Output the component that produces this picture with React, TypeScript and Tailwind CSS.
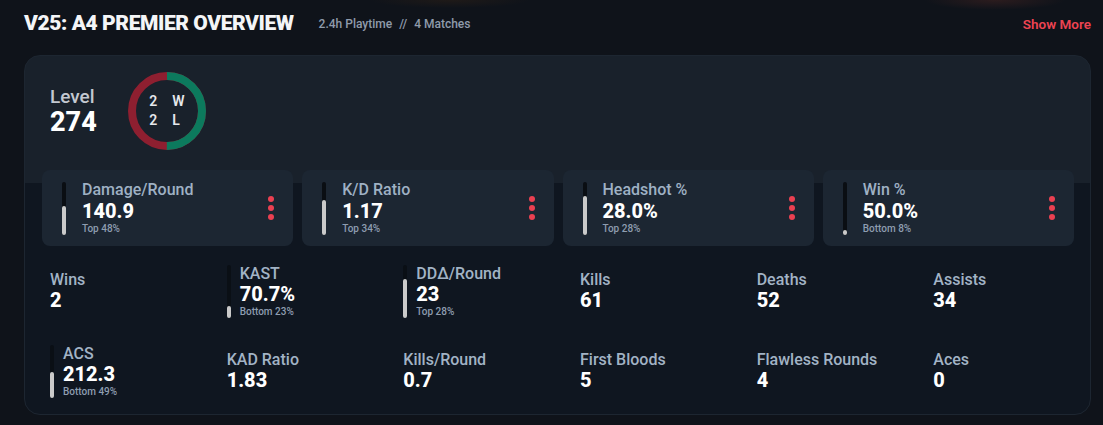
import React from 'react';

type Stat = {
  label: string;
  value: string;
  sub?: string;
  fill?: number;
};

const cardStats: Stat[] = [
  { label: 'Damage/Round', value: '140.9', sub: 'Top 48%', fill: 53 },
  { label: 'K/D Ratio', value: '1.17', sub: 'Top 34%', fill: 65 },
  { label: 'Headshot %', value: '28.0%', sub: 'Top 28%', fill: 73 },
  { label: 'Win %', value: '50.0%', sub: 'Bottom 8%', fill: 8 },
];

const gridStats: Stat[] = [
  { label: 'Wins', value: '2' },
  { label: 'KAST', value: '70.7%', sub: 'Bottom 23%', fill: 22 },
  { label: 'DDΔ/Round', value: '23', sub: 'Top 28%', fill: 73 },
  { label: 'Kills', value: '61' },
  { label: 'Deaths', value: '52' },
  { label: 'Assists', value: '34' },
  { label: 'ACS', value: '212.3', sub: 'Bottom 49%', fill: 49 },
  { label: 'KAD Ratio', value: '1.83' },
  { label: 'Kills/Round', value: '0.7' },
  { label: 'First Bloods', value: '5' },
  { label: 'Flawless Rounds', value: '4' },
  { label: 'Aces', value: '0' },
];

// vertical percentile bar, fills from the bottom
function Bar({ fill, track }: { fill: number; track: string }) {
  return (
    <div className={`flex h-[53px] w-[4px] shrink-0 flex-col justify-end rounded-full ${track}`}>
      <div className="w-full rounded-full bg-[#cacaca]" style={{ height: `${fill}%` }} />
    </div>
  );
}

function WinLossRing({ wins, losses }: { wins: number; losses: number }) {
  const r = 35;
  const c = 2 * Math.PI * r;
  const winPart = (wins / (wins + losses)) * c;
  return (
    <div className="relative h-[78px] w-[78px] shrink-0">
      <svg viewBox="0 0 78 78" className="h-full w-full -rotate-90">
        <circle cx="39" cy="39" r={r} fill="none" stroke="#8e1f30" strokeWidth="8" />
        <circle
          cx="39"
          cy="39"
          r={r}
          fill="none"
          stroke="#0c7a5d"
          strokeWidth="8"
          strokeDasharray={`${winPart} ${c}`}
        />
      </svg>
      <div className="absolute inset-0 flex items-center justify-center">
        <div className="grid grid-cols-[auto_auto] gap-x-[15px] text-[14px] font-semibold leading-[19px] text-[#e6e8ec]">
          <span>{wins}</span>
          <span>W</span>
          <span>{losses}</span>
          <span>L</span>
        </div>
      </div>
    </div>
  );
}

function StatCard({ stat }: { stat: Stat }) {
  return (
    <div className="flex h-[76px] items-center rounded-lg bg-[#1c2632] pl-[20px] pr-[19px]">
      <Bar fill={stat.fill ?? 0} track="bg-[#0a0e13]" />
      <div className="ml-[16px] flex min-w-0 flex-1 flex-col">
        <div className="text-[16px] font-medium leading-[18px] text-[#9fb1c4]">{stat.label}</div>
        <div className="text-[20px] font-extrabold leading-[24px] text-white">{stat.value}</div>
        <div className="text-[10px] font-medium leading-[12px] text-[#8e9db0]">{stat.sub}</div>
      </div>
      <div className="flex flex-col gap-[3px]">
        <span className="h-[6px] w-[6px] rounded-full bg-[#ea4051]" />
        <span className="h-[6px] w-[6px] rounded-full bg-[#ea4051]" />
        <span className="h-[6px] w-[6px] rounded-full bg-[#ea4051]" />
      </div>
    </div>
  );
}

function GridStat({ stat }: { stat: Stat }) {
  return (
    <div className="flex h-[53px] items-center gap-[9px]">
      {stat.fill !== undefined && <Bar fill={stat.fill} track="bg-[#0a0f15]" />}
      <div className="flex flex-col">
        <div className="whitespace-nowrap text-[16px] font-medium leading-[18px] text-[#a2b3c5]">
          {stat.label}
        </div>
        <div className="text-[20px] font-extrabold leading-[23px] text-white">{stat.value}</div>
        {stat.sub && (
          <div className="text-[10px] font-medium leading-[12px] text-[#8e9db0]">{stat.sub}</div>
        )}
      </div>
    </div>
  );
}

export default function App() {
  return (
    <div className="min-h-[425px] w-full bg-[#0f131a] bg-[radial-gradient(ellipse_70px_10px_at_995px_0px,#2c1c1e,transparent),radial-gradient(ellipse_80px_8px_at_450px_0px,#1f1a18,transparent)] pl-6 pr-3 pt-[11px] font-['Roboto',sans-serif]">
      <div className="mb-[20px] flex h-[24px] items-center">
        <h1 className="text-[21px] font-black uppercase leading-[24px] tracking-[-0.02em] text-[#f4f5f7]">
          V25: A4 Premier Overview
        </h1>
        <div className="ml-[25px] mt-[2px] flex items-center gap-[7px] text-[12px] font-medium text-[#8f9bab]">
          <span>2.4h Playtime</span>
          <span>//</span>
          <span>4 Matches</span>
        </div>
        <button className="ml-auto mt-[2px] text-[13.5px] font-semibold text-[#ec4352]">Show More</button>
      </div>

      <div className="rounded-[16px] border border-[#1d2631] bg-[linear-gradient(to_bottom,#19212b_127px,#0f1620_127px)] pb-[16px] pl-[17px] pr-[16px] pt-[16px]">
        <div className="flex items-center pl-[8px]">
          <div className="flex w-[78px] flex-col">
            <span className="text-[19px] font-medium leading-[21px] text-[#c3c8d0]">Level</span>
            <span className="text-[27px] font-extrabold leading-[30px] text-white">274</span>
          </div>
          <WinLossRing wins={2} losses={2} />
        </div>

        <div className="mt-[20px] grid grid-cols-4 gap-[9px]">
          {cardStats.map((s) => (
            <StatCard key={s.label} stat={s} />
          ))}
        </div>

        <div className="mt-[19px] grid grid-cols-6 gap-x-9 gap-y-[27px] pl-[8px]">
          {gridStats.map((s) => (
            <GridStat key={s.label} stat={s} />
          ))}
        </div>
      </div>
    </div>
  );
}
